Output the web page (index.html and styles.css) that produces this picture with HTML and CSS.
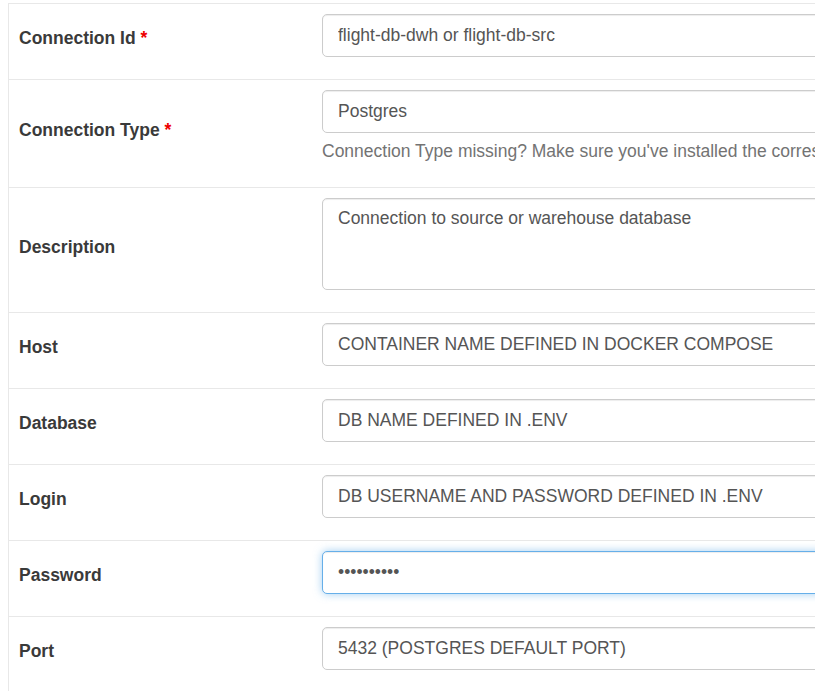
FILE: index.html
```html
<!DOCTYPE html>
<html lang="en">
<head>
<meta charset="utf-8">
<title>Edit Connection</title>
<link rel="stylesheet" href="styles.css">
</head>
<body>
<div class="page">
  <table class="form-table">
    <tbody>
      <tr>
        <td class="label-cell"><label>Connection Id <span class="req">*</span></label></td>
        <td class="field-cell"><input class="form-control" type="text" value="flight-db-dwh or flight-db-src" readonly></td>
      </tr>
      <tr>
        <td class="label-cell"><label>Connection Type <span class="req">*</span></label></td>
        <td class="field-cell">
          <div class="form-control select">Postgres</div>
          <p class="help-block">Connection Type missing? Make sure you've installed the corresponding Airflow Provider Package.</p>
        </td>
      </tr>
      <tr>
        <td class="label-cell"><label>Description</label></td>
        <td class="field-cell"><textarea class="form-control textarea" readonly>Connection to source or warehouse database</textarea></td>
      </tr>
      <tr>
        <td class="label-cell"><label>Host</label></td>
        <td class="field-cell"><input class="form-control" type="text" value="CONTAINER NAME DEFINED IN DOCKER COMPOSE" readonly></td>
      </tr>
      <tr>
        <td class="label-cell"><label>Database</label></td>
        <td class="field-cell"><input class="form-control" type="text" value="DB NAME DEFINED IN .ENV" readonly></td>
      </tr>
      <tr>
        <td class="label-cell"><label>Login</label></td>
        <td class="field-cell"><input class="form-control" type="text" value="DB USERNAME AND PASSWORD DEFINED IN .ENV" readonly></td>
      </tr>
      <tr>
        <td class="label-cell"><label>Password</label></td>
        <td class="field-cell"><div class="form-control focused"><span class="dots">••••••••••</span></div></td>
      </tr>
      <tr>
        <td class="label-cell"><label>Port</label></td>
        <td class="field-cell"><input class="form-control" type="text" value="5432 (POSTGRES DEFAULT PORT)" readonly></td>
      </tr>
    </tbody>
  </table>
</div>
</body>
</html>
```

FILE: styles.css
```css
html, body {
  margin: 0;
  padding: 0;
  overflow: hidden;
  background: #fff;
}

body {
  font-family: "Liberation Sans", Arial, sans-serif;
  font-size: 17.5px;
  line-height: 25px;
  color: #333;
}

.page {
  padding: 3px 0 0 8px;
  width: 1400px;
}

.form-table {
  border-collapse: collapse;
  width: 100%;
  border-left: 1px solid #e8e8e8;
}

.form-table tr {
  border-top: 1px solid #e8e8e8;
}

.label-cell {
  width: 283px;
  padding: 10px;
  vertical-align: middle;
}

.label-cell label {
  display: inline-block;
  font-weight: bold;
  margin-bottom: 6px;
  color: #3a3a3a;
}

.req {
  color: #e00;
}

.field-cell {
  padding: 10px 10px 10px 10px;
  vertical-align: top;
}

.form-control {
  display: block;
  box-sizing: border-box;
  width: 100%;
  height: 43px;
  padding: 8px 15px;
  margin: 0 0 12px 0;
  font-family: "Liberation Sans", Arial, sans-serif;
  font-size: 17.5px;
  line-height: 25px;
  color: #555;
  background: #fff;
  border: 1px solid #ccc;
  border-radius: 5px;
  box-shadow: inset 0 1px 1px rgba(0,0,0,.075);
  outline: none;
}

.select {
  margin-bottom: 0;
}

.textarea {
  height: 92px;
  padding-top: 7px;
  resize: none;
  overflow: hidden;
}

.help-block {
  margin: 6px 0 13px 0;
  color: #737373;
  white-space: nowrap;
}

.focused {
  border-color: #66afe9;
  box-shadow: inset 0 1px 1px rgba(0,0,0,.075), 0 0 8px rgba(102,175,233,.6);
}

.dots {
  color: #555;
  letter-spacing: 0;
}
```
